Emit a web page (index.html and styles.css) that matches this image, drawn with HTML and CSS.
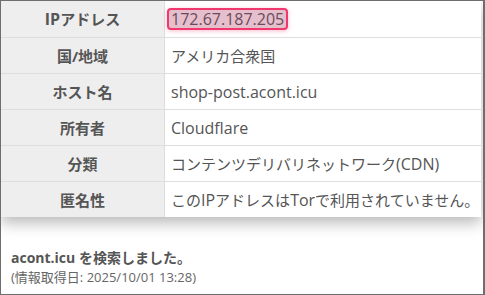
FILE: index.html
```html
<!DOCTYPE html>
<html lang="ja">
<head>
<meta charset="utf-8">
<link rel="stylesheet" href="styles.css">
</head>
<body>
<div class="frame">
  <table class="info">
    <tr><th><span class="en">IP</span>アドレス</th><td><span class="ip">172.67.187.205</span></td></tr>
    <tr><th>国/地域</th><td>アメリカ合衆国</td></tr>
    <tr><th>ホスト名</th><td><span class="en">shop-post.acont.icu</span></td></tr>
    <tr><th>所有者</th><td><span class="en">Cloudflare</span></td></tr>
    <tr><th>分類</th><td>コンテンツデリバリネットワーク<span class="en">(CDN)</span></td></tr>
    <tr><th>匿名性</th><td>この<span class="en">IP</span>アドレスは<span class="en">Tor</span>で利用されていません。</td></tr>
  </table>
  <div class="footer">
    <p class="searched">acont.icu を検索しました。</p>
    <p class="date">(情報取得日: 2025/10/01 13:28)</p>
  </div>
</div>
</body>
</html>
```
FILE: styles.css
```css
html, body {
  margin: 0;
  padding: 0;
  background: #ffffff;
}
body {
  font-family: "Open Sans", "Noto Sans CJK JP", sans-serif;
  color: #555555;
}
.frame {
  box-sizing: border-box;
  width: 485px;
  height: 295px;
  border: 1px solid #6e6e6e;
  border-right-width: 2px;
  padding-right: 2px;
  overflow: hidden;
}
.info {
  width: 100%;
  table-layout: fixed;
  border-collapse: collapse;
  box-shadow: 0 6px 14px rgba(0, 0, 0, 0.28);
}
.info th, .info td {
  height: 35px;
  padding: 0 6px;
  border-top: 1px solid #dddddd;
  font-size: 15px;
  line-height: 20px;
  white-space: nowrap;
}
.info tr:first-child th, .info tr:first-child td {
  border-top: none;
  height: 36px;
}
.info th {
  width: 151px;
  background: #eeeeee;
  border-right: 1px solid #dddddd;
  font-weight: bold;
  text-align: center;
  color: #555555;
}
.info td {
  text-align: left;
  color: #555555;
}
.en {
  font-size: 16px;
}
.ip {
  display: inline-block;
  margin-left: -4px;
  padding: 0 2px;
  font-size: 16px;
  line-height: 18px;
  background: #e6bfcc;
  border: 2px solid #f0386e;
  border-radius: 4px;
  color: #6b4a5e;
  box-shadow: 0 1px 4px rgba(240, 56, 110, 0.35);
}
.footer {
  padding: 30px 10px 0;
}
.footer p {
  margin: 0;
}
.searched {
  font-size: 14px;
  font-weight: bold;
  line-height: 21px;
}
.date {
  font-size: 13px;
  line-height: 18px;
  color: #666666;
}
```
